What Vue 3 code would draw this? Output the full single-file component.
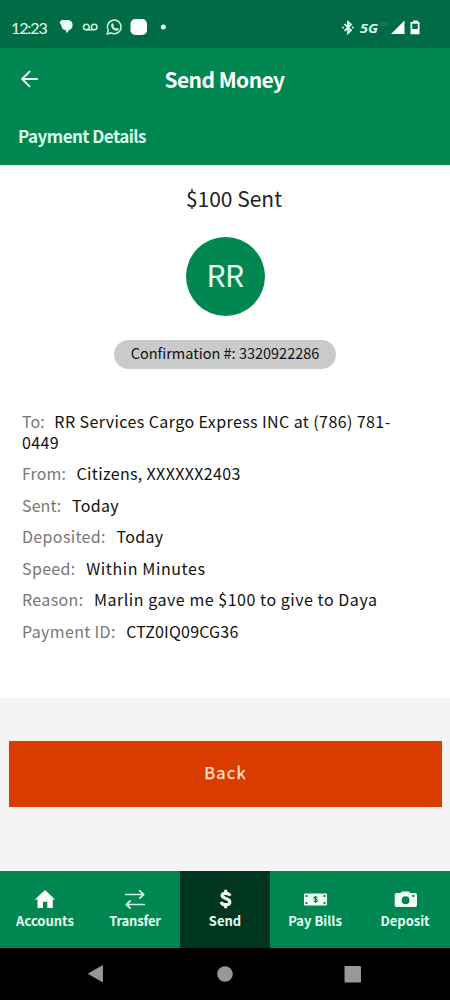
<script setup>
const details = [
  { label: 'To:', value: 'RR Services Cargo Express INC at (786) 781-0449', cls: 'to' },
  { label: 'From:', value: 'Citizens, XXXXXX2403', cls: 'from' },
  { label: 'Sent:', value: 'Today', cls: 'sent' },
  { label: 'Deposited:', value: 'Today', cls: 'deposited' },
  { label: 'Speed:', value: 'Within Minutes', cls: 'speed' },
  { label: 'Reason:', value: 'Marlin gave me $100 to give to Daya', cls: 'reason' },
  { label: 'Payment ID:', value: 'CTZ0IQ09CG36', cls: 'payment' }
]
</script>

<template>
  <div class="screen">
    <div class="status">
      <span class="clock">12:23</span>
      <svg class="status-left" width="112" height="20" viewBox="0 0 112 20">
        <path d="M2.500 2H9Q13.600 2.600 13.600 7.200Q13.600 11 10.300 11.900L7.600 15.300 6.800 12.200Q2.600 11.600 2.400 7.500L.5 4.500z" fill="#e6fff4" />
        <g fill="none" stroke="#cdf5e2" stroke-width="1.500">
          <circle cx="27.300" cy="9" r="2.800" /><circle cx="35.200" cy="9" r="2.800" /><path d="M27.300 11.800h7.900" />
          <path d="M48.200 15.900l1-3.800A6.800 6.800 0 1 1 52 14.900z" />
        </g>
        <path d="M52.700 5.400c.8-.5 1.400-.2 1.700.6l.4 1c.1.400-.5.900-.6 1.200.6 1.200 1.500 2 2.700 2.500.5-.3.800-1 1.300-.8l1.300.7c.3.2 0 1.500-.6 1.800-3.600 1.600-8.500-3.700-6.200-7z" fill="#d9faea" />
        <rect x="71.500" y="1" width="16.500" height="16" rx="4.800" fill="#fff" />
        <circle cx="104.300" cy="9" r="2.500" fill="#e6fff4" />
      </svg>
      <svg class="status-right" width="80" height="20" viewBox="0 0 80 20">
        <path d="M2.500 6l6.500 6.300-3 2.900V3.800L9 6.500l-6.500 6.300" fill="none" stroke="#e6fff4" stroke-width="1.700" />
        <circle cx="1" cy="9.500" r="1" fill="#e6fff4" /><circle cx="10.800" cy="9.500" r="1" fill="#e6fff4" />
        <text x="18" y="15" class="net" textLength="18" lengthAdjust="spacingAndGlyphs">5G</text>
        <text x="37" y="8" class="uw">UW</text>
        <path d="M49 16H62.500V2.500z" fill="#fff" />
        <path d="M71 2.500h5v1.500H77.500v12.300h-9V4h2.500z" fill="#fff" />
        <path d="M70.200 5.700h5.600v5.300h-5.600z" fill="#006b45" />
      </svg>
    </div>

    <header class="header">
      <div class="titlebar">
        <svg class="back-icon" width="18" height="18" viewBox="0 0 18 18">
          <path d="M16.800 9H1.500M9 1.200L1.200 9 9 16.800" fill="none" stroke="#eafff5" stroke-width="1.900" />
        </svg>
        <h1>Send Money</h1>
      </div>
      <h2>Payment Details</h2>
    </header>

    <main class="card">
      <div class="amount">$100 Sent</div>
      <div class="avatar">RR</div>
      <div class="pill">Confirmation #: 3320922286</div>
      <div class="details">
        <p v-for="d in details" :key="d.label" :class="['row', d.cls]">
          <span class="label">{{ d.label }}</span><span class="value">{{ d.value }}</span>
        </p>
      </div>
    </main>

    <section class="actions">
      <button class="back-button">Back</button>
    </section>

    <nav class="tabs">
      <a class="tab accounts">
        <svg width="24" height="22" viewBox="0 0 24 22">
          <path d="M12 2L22.200 11.500H19.800V20H14.300V13.800H10V20H4.500V11.500H1.800z" fill="#fff" />
        </svg>
        <span>Accounts</span>
      </a>
      <a class="tab transfer">
        <svg width="24" height="22" viewBox="0 0 24 22">
          <path d="M2 6.500h18.500M16.300 2.300l4.300 4.200-4.300 4.200M22 16.500H3.500M7.700 12.300l-4.300 4.200 4.300 4.200" fill="none" stroke="#d5f8e7" stroke-width="1.700" />
        </svg>
        <span>Transfer</span>
      </a>
      <a class="tab send">
        <svg width="24" height="22" viewBox="0 0 24 22">
          <path d="M17 7.700C16.500 6 14.900 5.300 12.600 5.300c-2.200 0-3.500.8-3.500 2.300 0 3.500 7.700 2.200 7.700 6.300 0 1.800-1.600 2.800-4.100 2.800-2.500 0-4.100-1-4.500-2.900" fill="none" stroke="#f2fbec" stroke-width="3.200" />
          <path d="M12.700 1.800v3.500M12.700 16.700v3.500" stroke="#f2fbec" stroke-width="3" />
        </svg>
        <span>Send</span>
      </a>
      <a class="tab bills">
        <svg width="24" height="22" viewBox="0 0 24 22">
          <rect x="1" y="5.500" width="23" height="12" rx="1" fill="#effff7" />
          <path d="M2.500 7h2v2h-2zM20.500 7h2v2h-2zM2.500 14h2v2h-2zM20.500 14h2v2h-2z" fill="#008751" />
          <path d="M14.200 9.700c-.7-1.200-3.300-1.100-3.300.3 0 1.500 3.500.8 3.500 2.500 0 1.500-2.900 1.600-3.700.3M12.600 8v7" fill="none" stroke="#008751" stroke-width="1.200" />
        </svg>
        <span>Pay Bills</span>
      </a>
      <a class="tab deposit">
        <svg width="24" height="22" viewBox="0 0 24 22">
          <path d="M3.500 5h4L9 3.400h7L17.500 5H22q2 0 2 2v10.300q0 1.700-2 1.700H3.500q-1.800 0-1.800-1.700V7q0-2 1.800-2z" fill="#f2fff9" />
          <circle cx="12.600" cy="12.200" r="3.900" fill="#008751" /><circle cx="20.200" cy="7.900" r="1.200" fill="#008751" />
        </svg>
        <span>Deposit</span>
      </a>
    </nav>

    <footer class="system-nav">
      <svg width="20" height="20" viewBox="0 0 20 20"><path d="M14.500 1.700v16L.5 9.700z" fill="#989898" stroke="#989898" stroke-linejoin="round" /></svg>
      <svg width="20" height="20" viewBox="0 0 20 20"><circle cx="10" cy="10" r="7.800" fill="#989898" /></svg>
      <svg width="20" height="20" viewBox="0 0 20 20"><rect x="1.500" y="2" width="16.500" height="16.500" rx="1" fill="#989898" /></svg>
    </footer>
  </div>
</template>

<style>
body { margin: 0; background: #000; }
</style>

<style scoped>
* { box-sizing: border-box; }
.screen {
  width: 450px;
  height: 1000px;
  display: flex;
  flex-direction: column;
  overflow: hidden;
  font-family: "Noto Sans CJK SC", "Noto Sans", sans-serif;
  background: #fff;
}
.status {
  height: 48px;
  flex: none;
  display: flex;
  align-items: center;
  padding: 7px 28px 0 11px;
  background: #006b45;
}
.clock {
  width: 47.500px;
  font: 16px/20px Lato, sans-serif;
  letter-spacing: -1.100px;
  color: #e2fdf0;
}
.status-right { margin-left: auto; }
.net { font: italic 700 13px "Open Sans", sans-serif; fill: #d9faea; }
.uw { font: 700 5px "Open Sans", sans-serif; fill: #2a8060; }
.header {
  height: 117px;
  flex: none;
  background: #008751;
  color: #fff;
}
.titlebar {
  height: 64px;
  display: grid;
  grid-template-columns: 64px 1fr 64px;
  align-items: center;
}
.back-icon { margin: -2px 0 0 21px; }
h1 {
  margin: -2px 1px 0 0;
  text-align: center;
  font-size: 21px;
  line-height: 30px;
  font-weight: 700;
  letter-spacing: -0.55px;
}
h2 {
  margin: 9px 0 0 18px;
  font-size: 17px;
  line-height: 30px;
  font-weight: 700;
  letter-spacing: -0.55px;
  color: #dbfbec;
}
.card {
  height: 533px;
  flex: none;
  display: flex;
  flex-direction: column;
  align-items: center;
  background: #fff;
}
.amount {
  margin: 17px -18px 0 0;
  font-size: 21px;
  line-height: 32px;
  color: #222;
}
.avatar {
  width: 79px;
  height: 79px;
  margin-top: 23.400px;
  border-radius: 50%;
  background: #008751;
  color: #e6fff4;
  font-size: 30px;
  line-height: 75px;
  letter-spacing: -0.5px;
  text-align: center;
}
.pill {
  width: 222px;
  height: 29px;
  margin-top: 23.600px;
  border-radius: 15px;
  background: #cacaca;
  color: #111;
  font-size: 14.500px;
  line-height: 26px;
  letter-spacing: 0;
  text-align: center;
}
.details {
  width: 100%;
  margin-top: 42px;
  padding: 0 24px 0 22px;
}
.row {
  margin: 0 0 10.700px;
  font-size: 16px;
  line-height: 20.800px;
  letter-spacing: 0.35px;
}
.label {
  display: inline-block;
  margin-right: 10.500px;
  color: #777;
}
.value { color: #111; }
.to .value { letter-spacing: 0.41px; }
.to .label { margin-right: 9.500px; }
.from .label, .sent .label, .to .label { letter-spacing: 0.1px; }
.speed .value { letter-spacing: 0.6px; }
.reason .value { letter-spacing: 0.54px; }
.payment .value { letter-spacing: 0.2px; }
.actions {
  height: 172.500px;
  flex: none;
  padding: 43px 8px 0 9px;
  background: #f4f4f4;
}
.back-button {
  display: block;
  width: 100%;
  height: 66px;
  padding: 0 0 4px;
  border: 0;
  background: #da3c00;
  color: #ffe6cf;
  font-family: inherit;
  font-size: 16.500px;
  letter-spacing: 1.200px;
  -webkit-text-stroke: 0.25px #ffe6cf;
}
.tabs {
  height: 77.500px;
  flex: none;
  display: grid;
  grid-template-columns: repeat(5, 1fr);
  background: #008751;
}
.tab {
  display: flex;
  flex-direction: column;
  align-items: center;
  padding-top: 17.500px;
  font-size: 13px;
  line-height: 20px;
  font-weight: 700;
  color: #e3fff2;
}
.tab span { margin: 1px 0 0; white-space: nowrap; }
.send { background: #003520; }
.transfer span { letter-spacing: -0.2px; }
.system-nav {
  flex: 1;
  display: flex;
  justify-content: center;
  align-items: center;
  gap: 107.500px;
  background: #000;
}
</style>
